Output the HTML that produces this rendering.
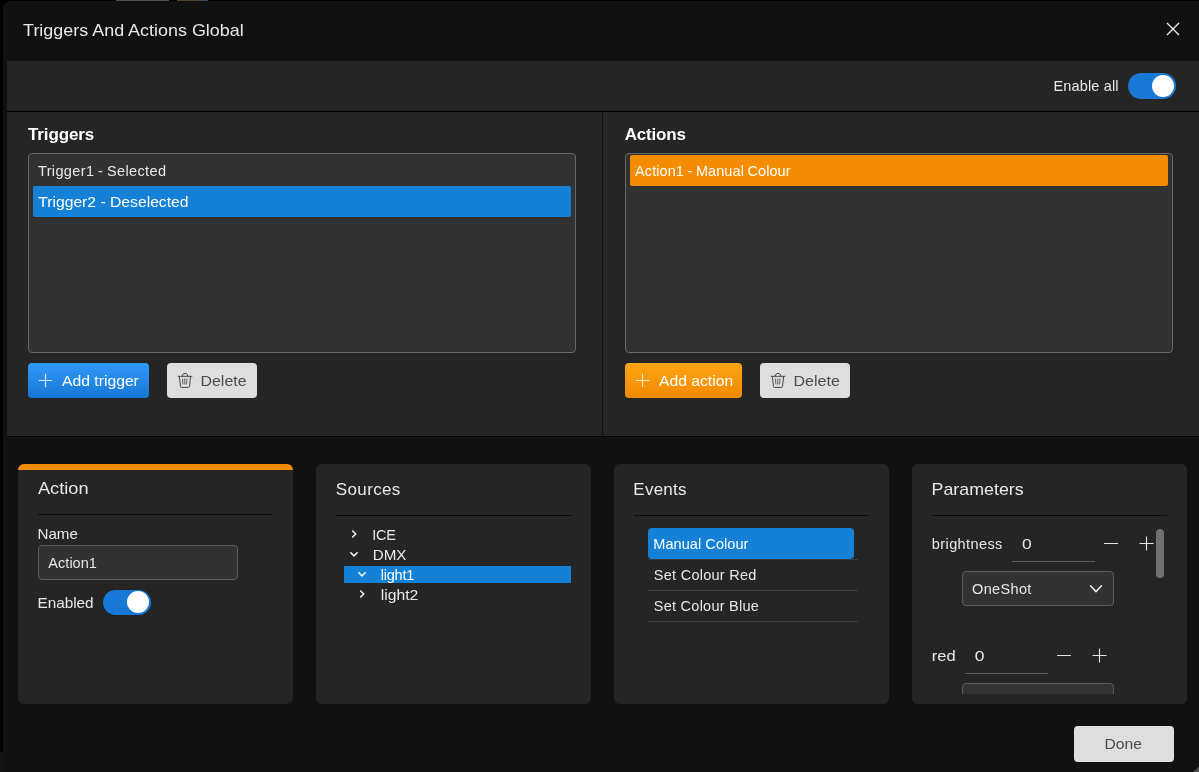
<!DOCTYPE html>
<html>
<head>
<meta charset="utf-8">
<title>Triggers And Actions Global</title>
<style>
html,body{margin:0;padding:0;}
body{width:1199px;height:772px;overflow:hidden;background:#000;font-family:"Liberation Sans",sans-serif;color:#e8e8e8;position:relative;}
*{box-sizing:border-box;}
.abs{position:absolute;}
.t{position:absolute;white-space:nowrap;line-height:1;}
#root{position:absolute;left:0;top:0;width:1199px;height:772px;overflow:hidden;will-change:transform;}
#dialog{left:3px;top:1px;width:1200px;height:780px;background:#111111;border-top-left-radius:7px;}
#lowstrip{left:0;top:752px;width:3px;height:20px;background:#131313;}
#tab1{left:116px;top:0;width:53px;height:1px;background:#505050;}
#tab2{left:177px;top:0;width:31px;height:1px;background:linear-gradient(90deg,#4d4030 0,#4d4030 29px,#1d4f8f 29px);}
#toolbar{left:7px;top:61px;width:1192px;height:50px;background:#252525;}
#hline1{left:7px;top:111px;width:1192px;height:1px;background:#000;}
#panels{left:7px;top:112px;width:1192px;height:324px;background:#252525;}
#vdiv{left:602px;top:112px;width:1px;height:324px;background:#121212;}
#hline2{left:7px;top:436px;width:1192px;height:1px;background:#000;}
.list{background:#323232;border:1px solid #686868;border-radius:4px;}
.btn{border-radius:4px;height:35px;top:363px;}
.blue{background:linear-gradient(#3299f8,#1477d5);}
.orange{background:linear-gradient(#ffa514,#f28900);}
.grey{background:#dedede;}
.card{background:#252525;border-radius:6px;top:464px;width:275px;height:240px;}
.cdiv{height:1px;background:#0c0c0c;width:235px;top:51px;left:20px;}
.toggle{width:47.5px;height:25.4px;border-radius:13px;background:#1778d5;}
.toggle i{position:absolute;left:24px;top:1.8px;width:22px;height:22px;border-radius:50%;background:#fff;}
.sel{background:#1581d6;}
</style>
</head>
<body>
<div id="root">
<div class="abs" id="tab1"></div>
<div class="abs" id="tab2"></div>
<div class="abs" id="dialog"></div>
<div class="abs" id="lowstrip"></div>
<div class="abs" id="toolbar"></div>
<div class="abs" id="hline1"></div>
<div class="abs" id="panels"></div>
<div class="abs" id="vdiv"></div>
<div class="abs" id="hline2"></div>

<!-- title bar -->
<div class="t" id="x_title" style="left:23px;top:22.16px;font-size:17px;letter-spacing:0.000px;transform:translateX(0.098px) scaleX(1.0549);transform-origin:0 50%;">Triggers And Actions Global</div>
<svg class="abs" style="left:1166px;top:22px" width="14" height="14" viewBox="0 0 14 14"><path d="M1 1L13 13M13 1L1 13" stroke="#f2f2f2" stroke-width="1.3" fill="none"/></svg>

<!-- toolbar -->
<div class="t" id="x_enall" style="left:1053.48px;top:78.53px;font-size:14.5px;letter-spacing:0.146px;">Enable all</div>
<div class="abs toggle" style="left:1128px;top:73.2px;"><i></i></div>

<!-- triggers -->
<div class="t" id="x_trig" style="left:27.97px;top:125.66px;font-size:17px;font-weight:bold;color:#fff;letter-spacing:-0.108px;">Triggers</div>
<div class="abs list" style="left:28px;top:153px;width:548px;height:200px;"></div>
<div class="t" id="x_t1" style="left:38.03px;top:163.87px;font-size:14.5px;word-spacing:-0.6px;letter-spacing:0.354px;">Trigger1 - Selected</div>
<div class="abs sel" style="left:33px;top:186px;width:538px;height:31px;border-radius:2px;"></div>
<div class="t" id="x_t2" style="left:38px;top:194.52px;font-size:14.5px;color:#fff;word-spacing:0px;letter-spacing:0.000px;transform:translateX(0.204px) scaleX(1.0824);transform-origin:0 50%;">Trigger2 - Deselected</div>
<div class="abs btn blue" style="left:28px;width:121px;"></div>
<svg class="abs" style="left:38px;top:373px" width="15" height="15" viewBox="0 0 15 15"><path d="M7.5 0.8V14.2M0.8 7.5H14.2" stroke="#e3f0fe" stroke-width="1.1" fill="none"/></svg>
<div class="t" id="x_addt" style="left:61px;top:374.39px;font-size:14.5px;color:#fff;letter-spacing:0.000px;transform:translateX(0.937px) scaleX(1.0845);transform-origin:0 50%;">Add trigger</div>
<div class="abs btn grey" style="left:167px;width:90px;"></div>
<svg class="abs" style="left:177px;top:372px" width="16" height="16" viewBox="0 0 16 16"><g stroke="#474747" stroke-width="1" fill="none" stroke-linecap="round" stroke-linejoin="round"><path d="M1.1 4.3H14.9"/><path d="M5.3 4.1C5.3 2.3 6.4 1.4 8 1.4C9.6 1.4 10.7 2.3 10.7 4.1"/><path d="M2.4 4.6L3.5 14.6Q3.6 15.4 4.4 15.4H11.6Q12.4 15.4 12.5 14.6L13.6 4.6"/><path d="M5.5 6.9L5.9 12.1M7.75 6.9V12.1M10 6.9L9.6 12.1" stroke-width="0.8" stroke="#404040"/></g></svg>
<div class="t" id="x_del1" style="left:200px;top:374.13px;font-size:14.5px;color:#4a4a4a;letter-spacing:0.000px;transform:translateX(0.475px) scaleX(1.0990);transform-origin:0 50%;">Delete</div>

<!-- actions -->
<div class="t" id="x_act" style="left:624.82px;top:125.61px;font-size:17px;font-weight:bold;color:#fff;letter-spacing:-0.218px;">Actions</div>
<div class="abs list" style="left:625px;top:153px;width:548px;height:200px;"></div>
<div class="abs" style="left:630px;top:155px;width:538px;height:31px;border-radius:2px;background:#f48c02;"></div>
<div class="t" id="x_a1" style="left:635.11px;top:163.84px;font-size:14.5px;color:#fff;word-spacing:-0.6px;letter-spacing:0.077px;">Action1 - Manual Colour</div>
<div class="abs btn orange" style="left:625px;width:117px;"></div>
<svg class="abs" style="left:635px;top:373px" width="15" height="15" viewBox="0 0 15 15"><path d="M7.5 0.8V14.2M0.8 7.5H14.2" stroke="#feeed2" stroke-width="1.1" fill="none"/></svg>
<div class="t" id="x_adda" style="left:659px;top:374.24px;font-size:14.5px;color:#fff;letter-spacing:0.000px;transform:translateX(0.106px) scaleX(1.0802);transform-origin:0 50%;">Add action</div>
<div class="abs btn grey" style="left:760px;width:90px;"></div>
<svg class="abs" style="left:770px;top:372px" width="16" height="16" viewBox="0 0 16 16"><g stroke="#474747" stroke-width="1" fill="none" stroke-linecap="round" stroke-linejoin="round"><path d="M1.1 4.3H14.9"/><path d="M5.3 4.1C5.3 2.3 6.4 1.4 8 1.4C9.6 1.4 10.7 2.3 10.7 4.1"/><path d="M2.4 4.6L3.5 14.6Q3.6 15.4 4.4 15.4H11.6Q12.4 15.4 12.5 14.6L13.6 4.6"/><path d="M5.5 6.9L5.9 12.1M7.75 6.9V12.1M10 6.9L9.6 12.1" stroke-width="0.8" stroke="#404040"/></g></svg>
<div class="t" id="x_del2" style="left:793px;top:374.13px;font-size:14.5px;color:#4a4a4a;letter-spacing:0.000px;transform:translateX(0.549px) scaleX(1.1037);transform-origin:0 50%;">Delete</div>

<!-- cards -->
<div class="abs card" id="c1" style="left:18px;overflow:hidden;"><div style="height:6px;background:#f48c02;"></div></div>
<div class="abs card" id="c2" style="left:316px;"></div>
<div class="abs card" id="c3" style="left:614px;"></div>
<div class="abs card" id="c4" style="left:912px;"></div>


<!-- card 1 content -->
<div class="t" id="x_c1t" style="left:37px;top:480.37px;font-size:17px;letter-spacing:0.000px;transform:translateX(0.961px) scaleX(1.0709);transform-origin:0 50%;">Action</div>
<div class="abs cdiv" style="left:38px;top:514px;"></div>
<div class="t" id="x_name" style="left:37px;top:526.91px;font-size:14.5px;letter-spacing:0.000px;transform:translateX(0.459px) scaleX(1.0436);transform-origin:0 50%;">Name</div>
<div class="abs" style="left:38px;top:545px;width:200px;height:35px;background:#323232;border:1px solid #5c5c5c;border-radius:4px;"></div>
<div class="t" id="x_a1v" style="left:48.37px;top:556.24px;font-size:14.5px;letter-spacing:0.022px;">Action1</div>
<div class="t" id="x_enab" style="left:37px;top:595.73px;font-size:14.5px;letter-spacing:0.000px;transform:translateX(0.443px) scaleX(1.0554);transform-origin:0 50%;">Enabled</div>
<div class="abs toggle" style="left:103px;top:589.7px;height:25.1px;"><i></i></div>


<!-- card 2 content -->
<div class="t" id="x_c2t" style="left:335.79px;top:480.81px;font-size:17px;letter-spacing:0.371px;">Sources</div>
<div class="abs cdiv" style="left:336px;top:515px;"></div>
<svg class="abs" style="left:347.90px;top:527.90px" width="12" height="12" viewBox="-6 -6 12 12"><path d="M-1.8 -3.5L1.7 0L-1.8 3.5" stroke="#f2f2f2" stroke-width="1.5" fill="none"/></svg>
<div class="t" id="x_ice" style="left:372.19px;top:528.26px;font-size:14.5px;letter-spacing:-0.237px;">ICE</div>
<svg class="abs" style="left:347.90px;top:547.90px" width="12" height="12" viewBox="-6 -6 12 12"><path d="M-3.7 -1.7L0 1.9L3.7 -1.7" stroke="#f2f2f2" stroke-width="1.5" fill="none"/></svg>
<div class="t" id="x_dmx" style="left:372px;top:547.73px;font-size:14.5px;letter-spacing:0.000px;transform:translateX(0.710px) scaleX(1.0477);transform-origin:0 50%;">DMX</div>
<div class="abs sel" style="left:344px;top:566px;width:227px;height:17px;"></div>
<svg class="abs" style="left:355.90px;top:567.90px" width="12" height="12" viewBox="-6 -6 12 12"><path d="M-3.7 -1.7L0 1.9L3.7 -1.7" stroke="#f2f2f2" stroke-width="1.5" fill="none"/></svg>
<div class="t" id="x_l1" style="left:380.73px;top:567.74px;font-size:14.5px;color:#fff;letter-spacing:-0.213px;">light1</div>
<svg class="abs" style="left:355.90px;top:587.90px" width="12" height="12" viewBox="-6 -6 12 12"><path d="M-1.8 -3.5L1.7 0L-1.8 3.5" stroke="#f2f2f2" stroke-width="1.5" fill="none"/></svg>
<div class="t" id="x_l2" style="left:380px;top:587.71px;font-size:14.5px;letter-spacing:0.000px;transform:translateX(0.706px) scaleX(1.0825);transform-origin:0 50%;">light2</div>

<!-- card 3 content -->
<div class="t" id="x_c3t" style="left:633.37px;top:480.61px;font-size:17px;letter-spacing:0.226px;">Events</div>
<div class="abs cdiv" style="left:634px;top:515px;"></div>
<div class="abs sel" style="left:648px;top:528px;width:206px;height:31px;border-radius:4px;"></div>
<div class="abs" style="left:648px;top:559px;width:210px;height:1px;background:#3d3d3d;"></div>
<div class="abs" style="left:648px;top:590px;width:210px;height:1px;background:#3d3d3d;"></div>
<div class="abs" style="left:648px;top:621px;width:210px;height:1px;background:#3d3d3d;"></div>
<div class="t" id="x_e1" style="left:653.33px;top:536.74px;font-size:14.5px;color:#fff;letter-spacing:0.063px;">Manual Colour</div>
<div class="t" id="x_e2" style="left:653.87px;top:568.04px;font-size:14.5px;letter-spacing:0.256px;">Set Colour Red</div>
<div class="t" id="x_e3" style="left:653.87px;top:599.24px;font-size:14.5px;letter-spacing:0.240px;">Set Colour Blue</div>

<!-- card 4 content -->
<div class="t" id="x_c4t" style="left:931px;top:480.74px;font-size:17px;letter-spacing:0.000px;transform:translateX(0.545px) scaleX(1.0487);transform-origin:0 50%;">Parameters</div>
<div class="abs cdiv" style="left:932px;top:515px;"></div>
<div class="t" id="x_br" style="left:931.85px;top:536.80px;font-size:14.5px;letter-spacing:0.398px;">brightness</div>
<div class="t" id="x_z1" style="left:1022px;top:537.41px;font-size:14.5px;letter-spacing:0.000px;transform:translateX(-0.10px) scaleX(1.2);transform-origin:0 50%;">0</div>
<div class="abs" style="left:1012px;top:561px;width:83px;height:1px;background:#5a5a5a;"></div>
<div class="abs" style="left:1104px;top:543px;width:14px;height:1px;background:#e0e0e0;"></div>
<svg class="abs" style="left:1138.5px;top:536px" width="15" height="15" viewBox="0 0 15 15"><path d="M7.5 0.5V14.5M0.5 7.5H14.5" stroke="#e6e6e6" stroke-width="1.1" fill="none"/></svg>
<div class="abs" style="left:1156px;top:529px;width:8px;height:49px;border-radius:4px;background:#707070;"></div>
<div class="abs" style="left:962px;top:571px;width:152px;height:35px;background:#323232;border:1px solid #5c5c5c;border-radius:4px;"></div>
<div class="t" id="x_os" style="left:972.03px;top:581.53px;font-size:14.5px;letter-spacing:0.355px;">OneShot</div>
<svg class="abs" style="left:1088px;top:583px" width="16" height="12" viewBox="0 0 16 12"><path d="M2.2 2.6L8 8.6L13.8 2.6" stroke="#f0f0f0" stroke-width="1.5" fill="none"/></svg>
<div class="t" id="x_red" style="left:931px;top:649.13px;font-size:14.5px;letter-spacing:0.000px;transform:translateX(0.761px) scaleX(1.1402);transform-origin:0 50%;">red</div>
<div class="t" id="x_z2" style="left:974px;top:648.86px;font-size:14.5px;letter-spacing:0.000px;transform:translateX(0.85px) scaleX(1.2);transform-origin:0 50%;">0</div>
<div class="abs" style="left:965px;top:673px;width:83px;height:1px;background:#5a5a5a;"></div>
<div class="abs" style="left:1057px;top:655px;width:14px;height:1px;background:#e0e0e0;"></div>
<svg class="abs" style="left:1091.5px;top:648px" width="15" height="15" viewBox="0 0 15 15"><path d="M7.5 0.5V14.5M0.5 7.5H14.5" stroke="#e6e6e6" stroke-width="1.1" fill="none"/></svg>
<div class="abs" style="left:962px;top:683px;width:152px;height:11px;overflow:hidden;"><div style="width:152px;height:35px;background:#323232;border:1px solid #5c5c5c;border-radius:4px;"></div></div>

<!-- footer -->
<div class="abs grey" style="left:1074px;top:726px;width:100px;height:36px;border-radius:4px;"></div>
<div class="t" id="x_done" style="left:1104px;top:736.73px;font-size:14.5px;color:#4a4a4a;letter-spacing:0.000px;transform:translateX(0.553px) scaleX(1.0768);transform-origin:0 50%;">Done</div>
<svg class="abs" style="left:1191px;top:764px" width="8" height="8" viewBox="0 0 8 8"><path d="M8 2.8V8H2Z" fill="#4c4c4c"/></svg>
</div>
</body>
</html>
